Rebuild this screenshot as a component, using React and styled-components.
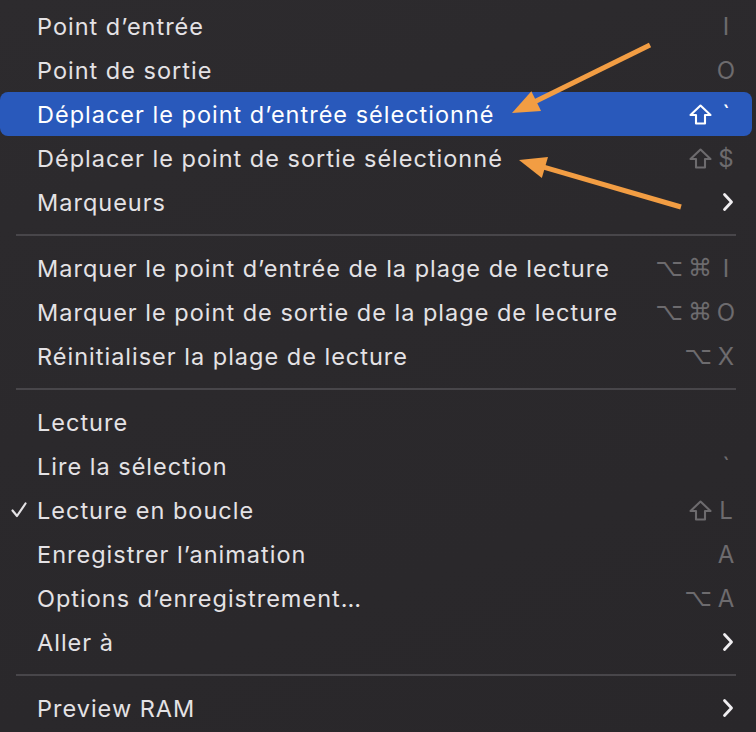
import React from "react";
import styled, { createGlobalStyle } from "styled-components";

const Global = createGlobalStyle`
  html, body { margin: 0; padding: 0; background: #2b292c; }
  body { font-family: "Inter", "Noto Sans", sans-serif; -webkit-font-smoothing: antialiased; }
`;

const Stage = styled.div`
  position: relative;
  width: 756px;
  height: 732px;
  overflow: hidden;
  background: linear-gradient(160deg, #2d2b2e 0%, #2b292c 45%, #29272a 100%);
`;

const Menu = styled.div`
  display: flex;
  flex-direction: column;
  padding-top: 4px;
`;

const Item = styled.div`
  display: grid;
  grid-template-columns: 37px 1fr auto;
  align-items: center;
  height: 44px;
  margin-right: 4px;
  padding-right: 16px;
  border-radius: 8px;
  background: ${(p) => (p.$active ? "#2959bb" : "transparent")};
  color: ${(p) => (p.$active ? "#ffffff" : "#e4e2e5")};
`;

const Check = styled.div`
  display: flex;
  justify-content: center;
  padding-left: 1px;
`;

const Label = styled.span`
  font-size: 23.5px;
  letter-spacing: 1px;
  white-space: nowrap;
`;

const Shortcut = styled.span`
  display: flex;
  align-items: center;
  gap: 4px;
  font-size: 24px;
  color: ${(p) => (p.$active ? "#ffffff" : "#6d6b6e")};
  font-family: "Inter", "DejaVu Sans", sans-serif;
`;

const Mods = styled.span`
  display: flex;
  align-items: center;
  gap: 5px;
`;

const Sym = styled.span`
  font-family: "DejaVu Sans", sans-serif;
  font-size: 24px;
  line-height: 1;
`;

const Key = styled.span`
  display: inline-block;
  width: 20px;
  text-align: center;
`;

const ChevronBox = styled.span`
  display: flex;
  margin-right: 2px;
`;

const Separator = styled.div`
  height: 22px;
  display: flex;
  align-items: center;
  padding: 0 20px 0 16px;
  &::after {
    content: "";
    flex: 1;
    height: 2px;
    background: #48464a;
  }
`;

const Overlay = styled.svg`
  position: absolute;
  left: 0;
  top: 0;
  pointer-events: none;
`;

const ShiftIcon = ({ color }) => (
  <svg width="23" height="21" viewBox="0 0 23 21">
    <path
      d="M11.5 1.5 L21.5 11 H16 V19.5 H7 V11 H1.5 Z"
      fill="none"
      stroke={color}
      strokeWidth="2.1"
      strokeLinejoin="round"
    />
  </svg>
);

const Chevron = () => (
  <ChevronBox>
    <svg width="12" height="20" viewBox="0 0 12 20">
      <path d="M2.5 2.5 L9.5 10 L2.5 17.5" fill="none" stroke="#f0eef1" strokeWidth="2.8" strokeLinecap="round" strokeLinejoin="round" />
    </svg>
  </ChevronBox>
);

const CheckMark = () => (
  <svg width="16" height="16" viewBox="0 0 16 16">
    <path d="M1.5 8.5 L6 14 L14.5 1.5" fill="none" stroke="#e4e2e5" strokeWidth="2.2" strokeLinecap="round" strokeLinejoin="round" />
  </svg>
);

const renderShortcut = (s, active) => {
  if (!s) return null;
  if (s === ">") return <Chevron />;
  const color = active ? "#ffffff" : "#6d6b6e";
  const mods = s.slice(0, -1);
  const key = s[s.length - 1];
  return (
    <Shortcut $active={active}>
      {mods.length > 0 && (
        <Mods>
          {mods.map((k, i) =>
            k === "shift" ? (
              <ShiftIcon key={i} color={color} />
            ) : (
              <Sym key={i}>{k === "opt" ? "⌥" : "⌘"}</Sym>
            )
          )}
        </Mods>
      )}
      <Key>{key}</Key>
    </Shortcut>
  );
};

const groups = [
  [
    { label: "Point d’entrée", sc: ["I"] },
    { label: "Point de sortie", sc: ["O"] },
    { label: "Déplacer le point d’entrée sélectionné", sc: ["shift", "`"], active: true },
    { label: "Déplacer le point de sortie sélectionné", sc: ["shift", "$"] },
    { label: "Marqueurs", sc: ">" },
  ],
  [
    { label: "Marquer le point d’entrée de la plage de lecture", sc: ["opt", "cmd", "I"] },
    { label: "Marquer le point de sortie de la plage de lecture", sc: ["opt", "cmd", "O"] },
    { label: "Réinitialiser la plage de lecture", sc: ["opt", "X"] },
  ],
  [
    { label: "Lecture" },
    { label: "Lire la sélection", sc: ["`"] },
    { label: "Lecture en boucle", sc: ["shift", "L"], checked: true },
    { label: "Enregistrer l’animation", sc: ["A"] },
    { label: "Options d’enregistrement…", sc: ["opt", "A"] },
    { label: "Aller à", sc: ">" },
  ],
  [{ label: "Preview RAM", sc: ">" }],
];

const Arrow = ({ x1, y1, x2, y2 }) => {
  const dx = x2 - x1;
  const dy = y2 - y1;
  const len = Math.hypot(dx, dy);
  const ux = dx / len;
  const uy = dy / len;
  const hl = 27;
  const hw = 11;
  const bx = x2 - ux * hl;
  const by = y2 - uy * hl;
  const px = -uy;
  const py = ux;
  const pts = `${x2},${y2} ${bx + px * hw},${by + py * hw} ${bx - px * hw},${by - py * hw}`;
  return (
    <g>
      <line x1={x1} y1={y1} x2={bx + ux * 4} y2={by + uy * 4} stroke="#f29d43" strokeWidth="5" />
      <polygon points={pts} fill="#f29d43" />
    </g>
  );
};

export default function App() {
  return (
    <>
      <Global />
      <Stage>
        <Menu>
          {groups.map((g, gi) => (
            <React.Fragment key={gi}>
              {gi > 0 && <Separator />}
              {g.map((it, i) => (
                <Item key={i} $active={it.active}>
                  <Check>{it.checked && <CheckMark />}</Check>
                  <Label>{it.label}</Label>
                  {renderShortcut(it.sc, it.active)}
                </Item>
              ))}
            </React.Fragment>
          ))}
        </Menu>
        <Overlay width="756" height="732" viewBox="0 0 756 732">
          <Arrow x1={650} y1={45} x2={512} y2={113} />
          <Arrow x1={681} y1={207} x2={519} y2={160} />
        </Overlay>
      </Stage>
    </>
  );
}
